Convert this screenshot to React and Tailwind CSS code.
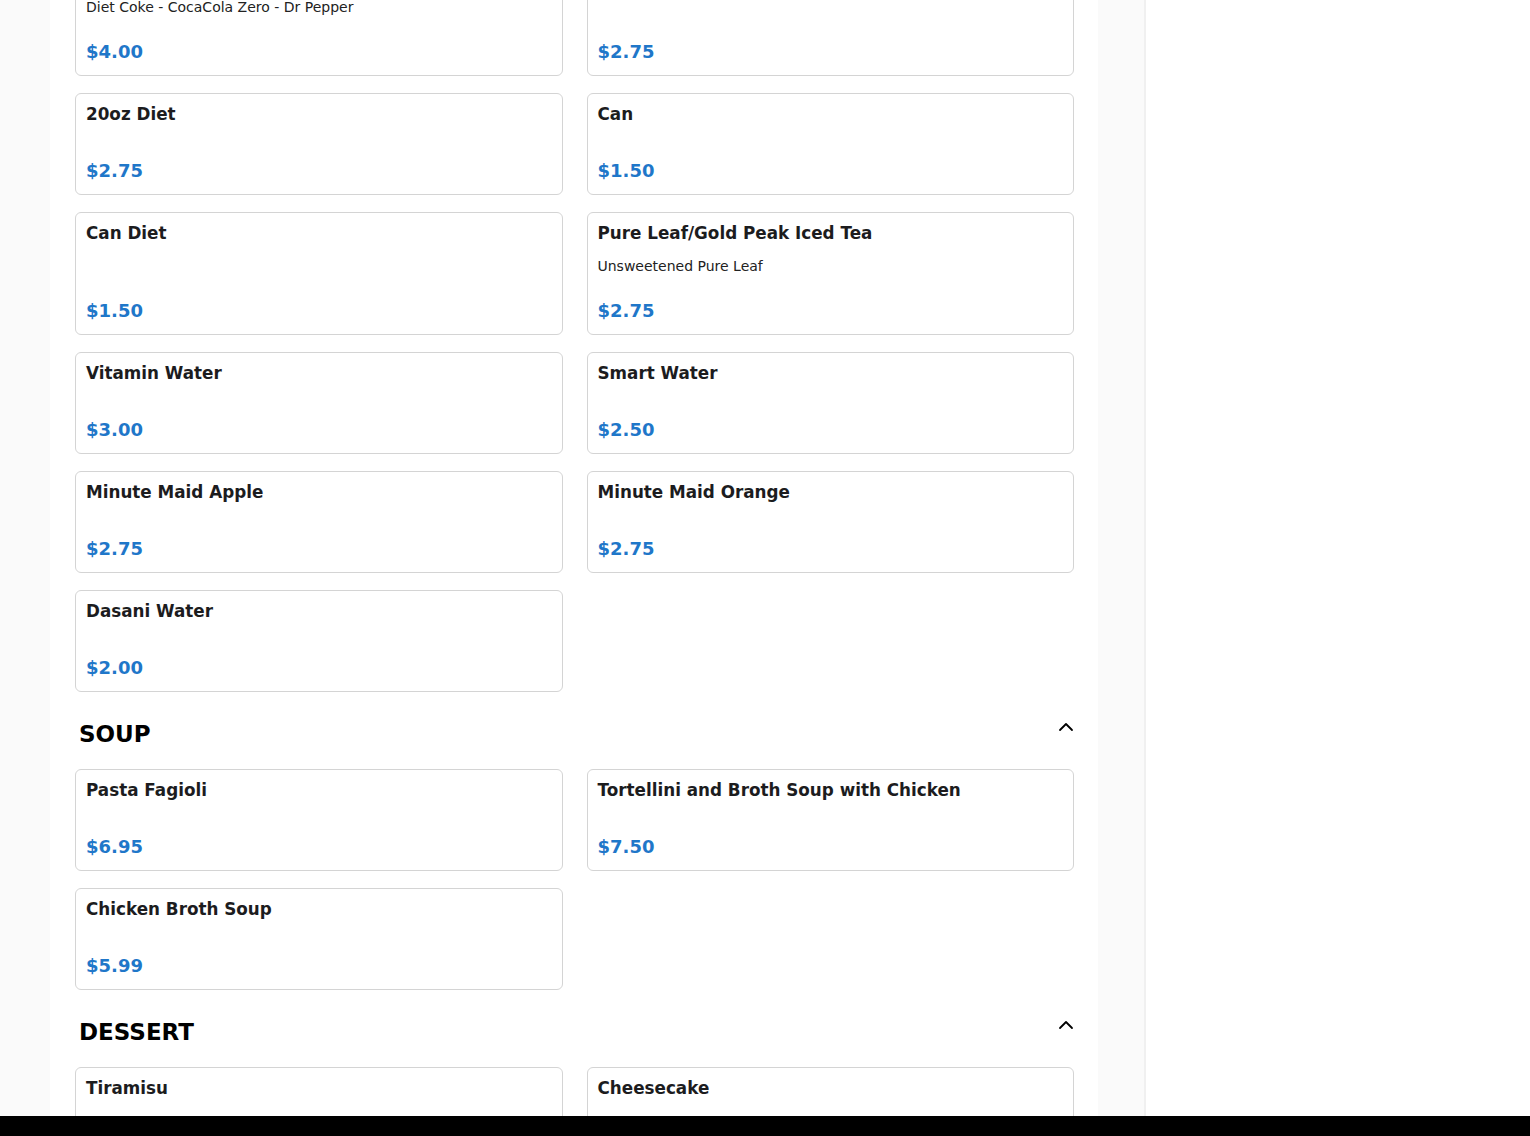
import React from 'react';
import { ChevronUp } from 'lucide-react';

const sections = [
  {
    title: null,
    items: [
      { name: '2 Liter', desc: 'Diet Coke - CocaCola Zero - Dr Pepper', price: '$4.00' },
      { name: '20oz', desc: '', price: '$2.75' },
      { name: '20oz Diet', desc: '', price: '$2.75' },
      { name: 'Can', desc: '', price: '$1.50' },
      { name: 'Can Diet', desc: '', price: '$1.50' },
      { name: 'Pure Leaf/Gold Peak Iced Tea', desc: 'Unsweetened Pure Leaf', price: '$2.75' },
      { name: 'Vitamin Water', desc: '', price: '$3.00' },
      { name: 'Smart Water', desc: '', price: '$2.50' },
      { name: 'Minute Maid Apple', desc: '', price: '$2.75' },
      { name: 'Minute Maid Orange', desc: '', price: '$2.75' },
      { name: 'Dasani Water', desc: '', price: '$2.00' },
    ],
  },
  {
    title: 'SOUP',
    items: [
      { name: 'Pasta Fagioli', desc: '', price: '$6.95' },
      { name: 'Tortellini and Broth Soup with Chicken', desc: '', price: '$7.50' },
      { name: 'Chicken Broth Soup', desc: '', price: '$5.99' },
    ],
  },
  {
    title: 'DESSERT',
    items: [
      { name: 'Tiramisu', desc: '', price: '$6.50' },
      { name: 'Cheesecake', desc: '', price: '$6.50' },
    ],
  },
];

const MenuCard = ({ item }) => (
  <div className="flex flex-col border border-[#d4d4d4] rounded-md bg-white px-[10px] pt-[10px] pb-[13px]">
    <h3 className="text-[16.8px] leading-[20px] font-bold text-[#1c1c1e]">{item.name}</h3>
    <p className="mt-[13px] text-[14px] leading-[21px] text-[#222]">{item.desc}</p>
    <div className="mt-auto pt-6 text-[18px] leading-[20px] font-bold text-[#1f77c9]">{item.price}</div>
  </div>
);

const SectionHeader = ({ title }) => (
  <div className="flex items-center justify-between pl-1 mt-[27px] mb-[22px]">
    <h2 className="text-[23px] leading-[28px] font-bold text-black translate-y-px">{title}</h2>
    <ChevronUp size={24} strokeWidth={1.8} className="-mr-[4px] -mt-[12px] text-black" />
  </div>
);

export default function App() {
  return (
    <div className="h-[1136px] flex flex-col overflow-hidden font-['DejaVu_Sans',sans-serif]">
      <div className="flex-1 flex min-h-0 overflow-hidden">
        {/* left gutter */}
        <div className="w-[50px] shrink-0 bg-[#fafafa]" />

        {/* menu */}
        <div className="w-[1048px] shrink-0 bg-white pl-[25px] pr-[24px]">
          <div className="-mt-[47px]">
            {sections.map((section, i) => (
              <div key={i}>
                {section.title && <SectionHeader title={section.title} />}
                <div className="grid grid-cols-2 gap-x-6 gap-y-[17px]">
                  {section.items.map((item, j) => (
                    <MenuCard key={j} item={item} />
                  ))}
                </div>
              </div>
            ))}
          </div>
        </div>

        {/* side strip */}
        <div className="w-[48px] shrink-0 bg-[#fafafa] border-r-2 border-[#f0f0f0]" />
        <div className="flex-1 bg-white" />
      </div>
      <div className="h-5 shrink-0 bg-black" />
    </div>
  );
}
